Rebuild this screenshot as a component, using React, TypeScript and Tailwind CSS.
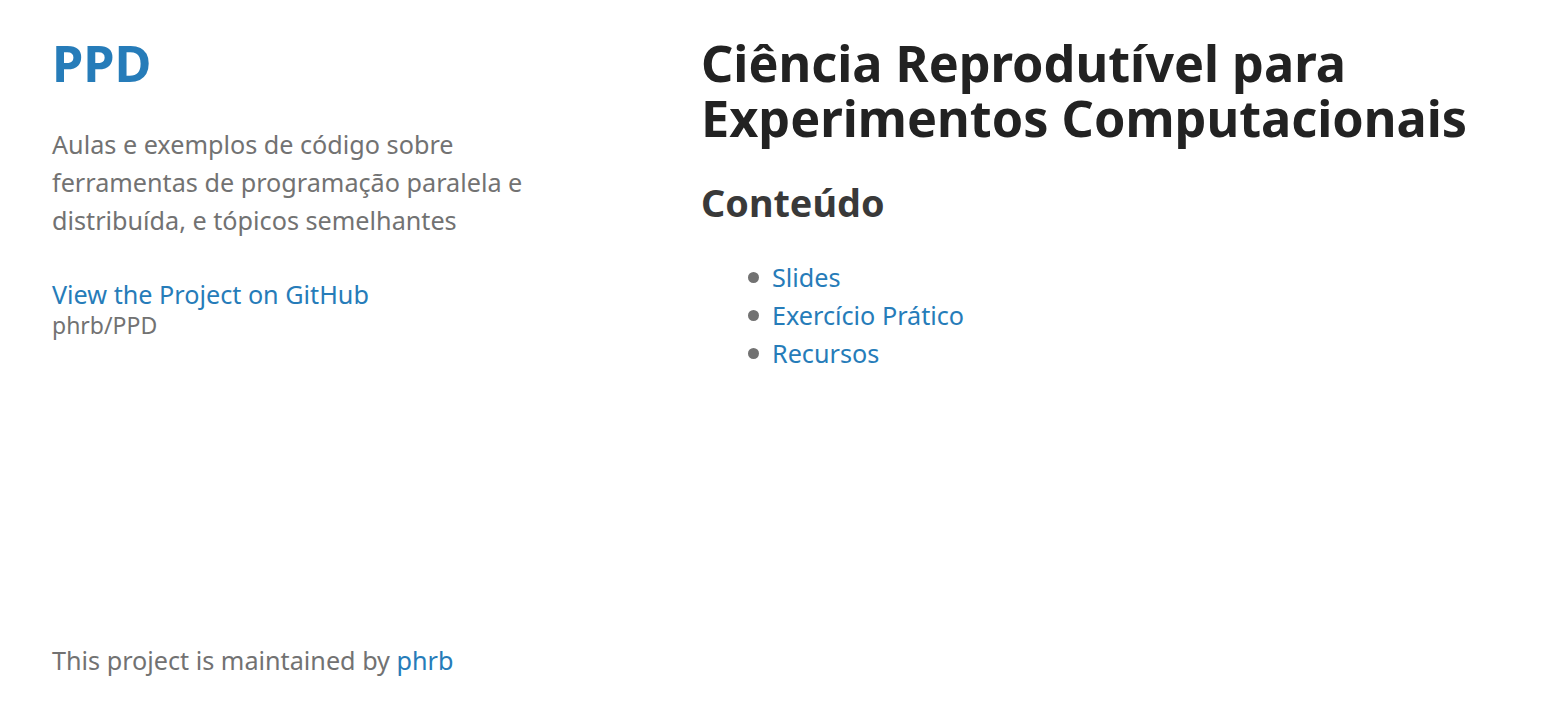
export default function App() {
  const items = ['Slides', 'Exercício Prático', 'Recursos'];

  return (
    <div className="flex h-[716px] bg-white text-[25.2px] leading-[38px] text-[#727272]" style={{ fontFamily: '"Noto Sans", "Open Sans", sans-serif' }}>
      {/* Header */}
      <header className="flex w-[701px] shrink-0 flex-col pl-[52px] pt-[35px]">
        <h1 className="mb-[35px] text-[50.4px] font-bold leading-[1.1] text-[#267CB9]">
          <a href="#">PPD</a>
        </h1>
        <p className="mb-[36px] w-[486px]">
          Aulas e exemplos de código sobre ferramentas de programação paralela e distribuída, e tópicos semelhantes
        </p>
        <p>
          <a href="#" className="text-[#267CB9]">View the Project on GitHub</a>
          <span className="block text-[23px] leading-[24px]">phrb/PPD</span>
        </p>
        <footer className="mt-auto pb-[37px]">
          This project is maintained by <a href="#" className="text-[#267CB9]">phrb</a>
        </footer>
      </header>

      {/* Section */}
      <section className="flex-1 pt-[36px]">
        <h1 className="mb-[36px] text-[50.4px] font-bold leading-[1.09] text-[#222]">
          Ciência Reprodutível para
          <br />
          Experimentos Computacionais
        </h1>
        <h2 className="mb-[35px] text-[37.8px] font-bold leading-[1.1] text-[#393939]">Conteúdo</h2>
        <ul className="pl-[47px]">
          {items.map((item) => (
            <li key={item} className="flex items-center">
              <span className="mr-[13px] h-[11px] w-[11px] rounded-full bg-[#727272]" />
              <a href="#" className="text-[#267CB9]">{item}</a>
            </li>
          ))}
        </ul>
      </section>
    </div>
  );
}
